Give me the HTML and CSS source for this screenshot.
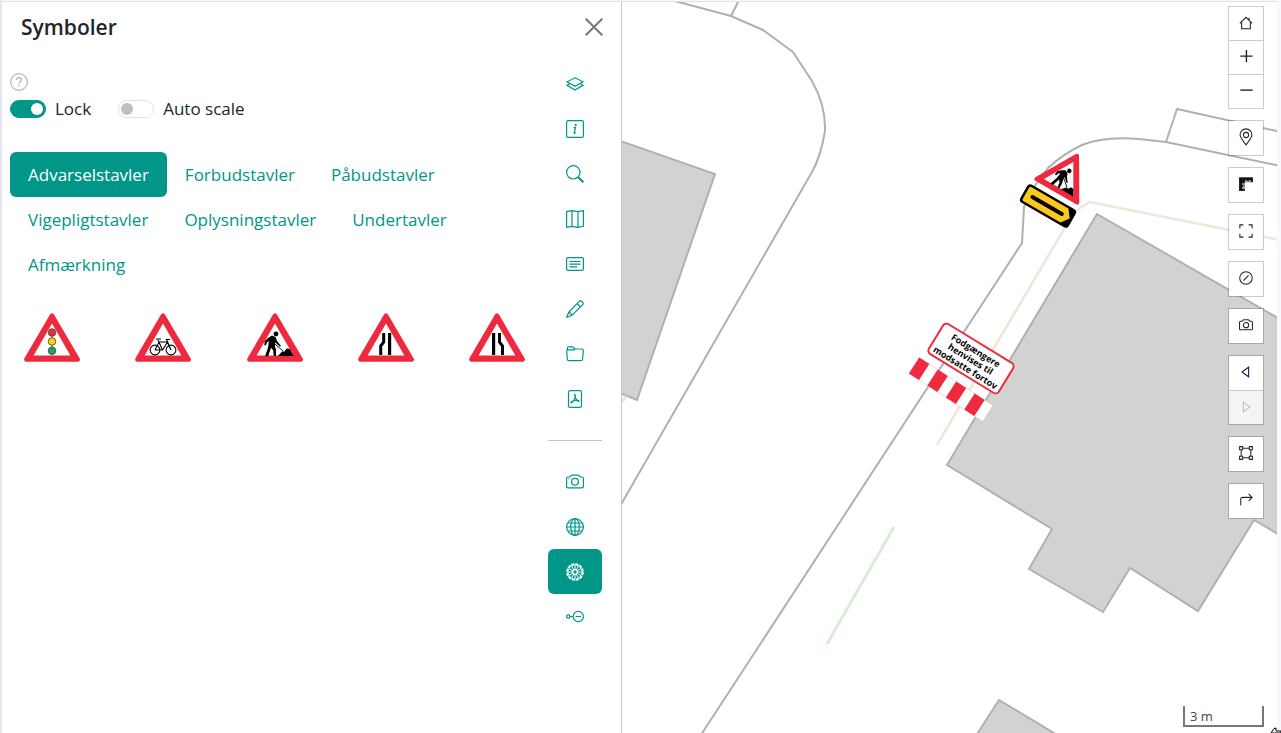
FILE: index.html
```html
<!DOCTYPE html>
<html lang="da">
<head>
<meta charset="utf-8">
<title>Symboler</title>
<link rel="stylesheet" href="styles.css">
</head>
<body>
<svg class="defs" aria-hidden="true">
  <symbol id="triangle" viewBox="0 0 56 50">
    <path d="M28 2.7 53.6 46.5H2.4Z" fill="#ee2a3e" stroke="#ee2a3e" stroke-width="4.6" stroke-linejoin="round"/>
    <path d="M28 10.500 46.400 42.500H9.600Z" fill="#fff"/>
  </symbol>
  <symbol id="worker" viewBox="0 0 56 50">
    <circle cx="29" cy="21" r="2.4"/>
    <path d="M25 22.5 28.5 24 30 28l4 5-1 .8-5-4.6v4l1 3.500 0 6h-2.300l-.6-5.500-2-2.500-3 8.500h-3l3-9 .8-6.200-2 1.500-1 3-1.600-.5.5-4 3.500-3.300Z"/>
    <path d="m28 31 8 7" fill="none" stroke="#000" stroke-width=".9"/>
    <path d="M31 43 35 38.500 37.500 38.500 39.500 35.500 43 36 44 38.500 46.500 42.500 46.500 43Z"/>
  </symbol>
</svg>

<div class="app">
  <aside class="panel">
    <header class="panel-header">
      <h1 class="title">Symboler</h1>
      <button class="close" aria-label="Luk"><svg viewBox="0 0 18 18"><path d="m.7.7 16.600 16.600M17.300.7.7 17.300"/></svg></button>
    </header>
    <div class="panel-body">
      <section class="content">
        <button class="help" aria-label="Hjælp"><svg class="icon" viewBox="0 0 18 18"><circle cx="9" cy="9" r="8.400"/><path d="M6.500 7c0-3.200 5-3.200 5 0 0 1.600-2.500 1.800-2.500 3.700M9 12v1.500" stroke-width="1.300"/></svg></button>
        <div class="options">
          <label class="option"><input class="switch" type="checkbox" checked>Lock</label>
          <label class="option"><input class="switch" type="checkbox">Auto scale</label>
        </div>
        <nav class="tabs">
          <button class="tab active">Advarselstavler</button>
          <button class="tab">Forbudstavler</button>
          <button class="tab">Påbudstavler</button>
          <button class="tab">Vigepligtstavler</button>
          <button class="tab">Oplysningstavler</button>
          <button class="tab">Undertavler</button>
          <button class="tab">Afmærkning</button>
        </nav>
        <div class="signs">
          <button class="sign" aria-label="Lyssignal"><svg viewBox="0 0 56 50"><use href="#triangle"/><path d="M28 18v24" stroke="#555"/><g stroke="#444" stroke-width=".8"><circle cx="28" cy="19.500" r="3.800" fill="#e3303b"/><circle cx="28" cy="28.500" r="3.800" fill="#fbd00f"/><circle cx="28" cy="37.700" r="3.800" fill="#1ba561"/></g></svg></button>
          <button class="sign" aria-label="Cyklister"><svg viewBox="0 0 56 50"><use href="#triangle"/><g fill="none" stroke="#000" stroke-width="1.100"><circle cx="20" cy="37" r="4.900"/><circle cx="36" cy="37" r="4.900"/><path d="m20 37 4-8h8.500l-5 8H20m7.500 0L23 27m-2-1h5m6.500 3.500L36 37l-4.500-10.500H35"/></g></svg></button>
          <button class="sign" aria-label="Vejarbejde"><svg viewBox="0 0 56 50"><use href="#triangle"/><use href="#worker"/></svg></button>
          <button class="sign" aria-label="Indsnævret vej venstre"><svg viewBox="0 0 56 50"><use href="#triangle"/><path d="M30 20h3.200v22H30zM24.200 20h3v9.500l-3 4V42h-3v-9.500l3-4z"/></svg></button>
          <button class="sign" aria-label="Indsnævret vej højre"><svg viewBox="0 0 56 50"><use href="#triangle"/><path d="M23 20h3.200v22H23zM29 20h3v8.500l3 4V42h-3v-8.500l-3-4z"/></svg></button>
        </div>
      </section>
      <nav class="rail">
        <button class="rail-item" aria-label="Lag"><svg class="icon" viewBox="0 0 18 18"><path d="m9 2.800 8 4-8 4.500-8-4.500Z"/><path d="m3.500 8.800-2.500 1.500 8 4.700 8-4.700-2.500-1.500"/></svg></button>
        <button class="rail-item" aria-label="Info"><svg class="icon" viewBox="0 0 18 18"><rect x=".6" y=".6" width="16.800" height="16.800" rx="1.500"/><path d="M7.500 7.500h2L8.200 13h1.600" stroke-width="1.300"/><circle cx="9.700" cy="4.800" r=".5"/></svg></button>
        <button class="rail-item" aria-label="Søg"><svg class="icon" viewBox="0 0 18 18"><circle cx="7.300" cy="7.300" r="6.700"/><path d="m12 12 5.300 5.300" stroke-width="2"/></svg></button>
        <button class="rail-item" aria-label="Kort"><svg class="icon" viewBox="0 0 18 18"><path d="M.6 1.700 6 .7l6 1 5.400-1v15.600l-5.400 1-6-1-5.400 1ZM6 .7v15.600m6-14.600v15.600"/></svg></button>
        <button class="rail-item" aria-label="Signatur"><svg class="icon" viewBox="0 0 18 18"><rect x=".6" y="2.600" width="16.800" height="12.800" rx="1.500"/><path d="M3.500 6.500h11m-11 2.700h11m-11 2.700h7.500"/></svg></button>
        <button class="rail-item" aria-label="Tegn"><svg class="icon" viewBox="0 0 18 18"><path d="M13.500 1.200q1-.9 2 0l1.300 1.300q.9 1 0 2L6 15.300.8 17.200l2-5.200ZM11 3.500l3.500 3.500M2.800 12l1.200.3v1.500l1.500.2.500 1.300"/></svg></button>
        <button class="rail-item" aria-label="Mappe"><svg class="icon" viewBox="0 0 18 18"><path d="M1.400 5V3q0-1.200 1.200-1.200h4L9 4h6.500q2 0 1.800 2l-.7 8q-.2 1.700-1.700 1.700h-12q-1.400 0-1.600-1.700L.7 6q0-1 1-1.200H9"/></svg></button>
        <button class="rail-item" aria-label="PDF"><svg class="icon" viewBox="0 0 18 18"><rect x="2.500" y=".6" width="13" height="16.800" rx="1.700"/><path d="M8.800 4.500q1.500 1-.2 4.500-1.500 3.500-3.400 4c-1.200-.7 1-2 3.600-2.500 3-.7 4.500-.3 4.200.8-1.500.5-4-2-4.200-6.800Z"/></svg></button>
        <hr class="rail-rule">
        <button class="rail-item" aria-label="Kamera"><svg class="icon" viewBox="0 0 18 18"><path d="M.6 5.500q0-1.500 1.400-1.500h1.500L5.700 2.100h6.600L14.500 4H16q1.400 0 1.400 1.500v8q0 1.400-1.400 1.400H2q-1.400 0-1.400-1.400Z"/><circle cx="9" cy="8.800" r="3.400"/><path d="M2.500 6h1"/></svg></button>
        <button class="rail-item" aria-label="Globus"><svg class="icon" viewBox="0 0 18 18"><circle cx="9" cy="9" r="8.400"/><ellipse cx="9" cy="9" rx="4.300" ry="8.400"/><path d="M9 .6v16.800M.6 9h16.800M2 5h14M2 13h14"/></svg></button>
        <button class="rail-item active" aria-label="Symboler"><svg class="icon" viewBox="0 0 18 18"><circle cx="9" cy="9" r="7.700" stroke-width="2.200" stroke-dasharray="3.230 .8"/><circle cx="9" cy="9" r="2.300"/><path d="M9 2v4.500m0 5V16M2 9h4.500m5 0H16M5.500 2.900l2.300 4m2.400 4.200 2.300 4M2.900 5.500l4 2.300m4.200 2.400 4 2.300M5.500 15.100l2.300-4m2.400-4.200 2.300-4M2.900 12.500l4-2.300m4.200-2.400 4-2.300" stroke-width="1"/></svg></button>
        <button class="rail-item" aria-label="Forbindelse"><svg class="icon" viewBox="0 0 18 18"><circle cx="2.300" cy="8.500" r="1.700"/><path d="M4 8.500h3m2.500 0h5.500"/><circle cx="12.300" cy="8.500" r="5.100"/></svg></button>
      </nav>
    </div>
  </aside>

  <main class="map">
    <svg class="map-canvas" viewBox="622 2 655 731" preserveAspectRatio="xMinYMin slice" role="img" aria-label="Kort">
      <g class="buildings">
        <path d="M615 139 715 174 637 400 615 391Z"/>
        <path d="M947 465 1097 214 1290 325V541L1254 520 1198 611 1130 568 1103 612 1029 569 1052 529Z"/>
        <path d="m970 745 29-45 70 42Z"/>
      </g>
      <g class="lines">
        <path d="M671 0 731 16 763 30 793 52 812 81Q826 106 825 131 821 156 812 172L615 515"/>
        <path d="m739 0-8 16"/>
        <path d="m695 744 327-501 2-36Q1029 192 1048 168 1063 154 1082 145 1104 136 1139 139L1166 142 1290 168"/>
        <path d="m1166 142 11-33 113 25"/>
      </g>
      <path class="lane" d="m937 445 130-221q5-13 23-22l200 40"/>
      <path class="hedge" d="m827 644 67-117M622 402l4-6"/>
      <g transform="translate(1063 180) rotate(30) scale(.92)">
        <use href="#triangle" x="-28" y="-33" width="56" height="50"/>
        <use href="#worker" x="-28" y="-33" width="56" height="50"/>
      </g>
      <g transform="translate(1048 206) rotate(30)">
        <rect x="-28" y="-10.500" width="56" height="21" rx="4"/>
        <path d="M-24-8h43l6 8-6 8h-43q-1.500 0-1.500-1.500v-13q0-1.500 1.500-1.500" fill="#fbc91c"/>
        <path d="M-18 0h34" stroke="#000" stroke-width="4" stroke-linecap="round"/>
      </g>
      <g transform="translate(971 358.500) rotate(31.500)">
        <rect class="plate" x="-41" y="-17.500" width="82" height="35" rx="4"/>
        <text class="plate-text" y="-6">Fodgængere</text>
        <text class="plate-text" y="4">henvises til</text>
        <text class="plate-text" y="14">modsatte fortov</text>
      </g>
      <g transform="translate(951 389.500) rotate(33)">
        <rect x="-44" y="-9.500" width="88" height="19" fill="#fff" stroke="#f7b8bf" stroke-width=".6"/>
        <path d="M-44-9.500h12v19h-12zm22 0h12v19h-12zm22 0h12v19H0zm22 0h12v19H22z" fill="#ee2a3e"/>
      </g>
    </svg>

    <div class="toolbar">
      <div class="tool-group">
        <button class="tool home" aria-label="Hjem"><svg class="tool-icon" viewBox="0 0 16 16"><path d="m1 8.500 7-7 7 7M3 7v7.500h10V7M11.500 2v2.500"/></svg></button>
        <button class="tool" aria-label="Zoom ind"><svg class="tool-icon" viewBox="0 0 16 16"><path d="M1.500 7h14M8.500 0v14" stroke-width="1.600"/></svg></button>
        <button class="tool" aria-label="Zoom ud"><svg class="tool-icon" viewBox="0 0 16 16"><path d="M1.500 7h14" stroke-width="1.600"/></svg></button>
      </div>
      <div class="tool-group"><button class="tool" aria-label="Position"><svg class="tool-icon tall" viewBox="0 0 16 20"><path d="M8 19C4 14 1.200 10.500 1.200 7.500a6.800 6.800 0 0 1 13.600 0C14.800 10.500 12 14 8 19Z"/><circle cx="8" cy="7.700" r="3"/></svg></button></div>
      <div class="tool-group"><button class="tool" aria-label="Mål"><svg class="tool-icon" viewBox="0 0 16 16"><path d="M.5 1h15v4.500H6V15.500H.5Z" fill="#111"/><path d="M8 6V3.500M10.200 6V4.500M12.400 6V3.500M6.500 8H3.500M6.500 10.200H4.500M6.500 12.400H3.500" stroke="#fff"/></svg></button></div>
      <div class="tool-group"><button class="tool" aria-label="Fuld skærm"><svg class="tool-icon" viewBox="0 0 16 16"><path d="M1 5V1h4m6 0h4v4m0 6v4h-4m-6 0H1v-4"/></svg></button></div>
      <div class="tool-group"><button class="tool" aria-label="Nulstil"><svg class="tool-icon" viewBox="0 0 16 16"><circle cx="8" cy="8" r="7.200"/><path d="m5 11 6-6"/></svg></button></div>
      <div class="tool-group"><button class="tool" aria-label="Gadefoto"><svg class="tool-icon" viewBox="0 0 16 16"><path d="M.6 5q0-1.200 1.200-1.200h1.500l2-1.700h5.400l2 1.700h1.500q1.200 0 1.200 1.200v7.300q0 1.200-1.200 1.200H1.800Q.6 13.500.6 12.300Z"/><circle cx="8" cy="8.200" r="3"/></svg></button></div>
      <div class="tool-group">
        <button class="tool" aria-label="Forrige"><svg class="tool-icon" viewBox="0 0 16 16"><path d="M11 2.500v11L3.500 8Z" stroke="#0b2a5c" stroke-width="1.300"/></svg></button>
        <button class="tool" aria-label="Næste" disabled><svg class="tool-icon" viewBox="0 0 16 16"><path d="M5 2.500v11L12.500 8Z"/></svg></button>
      </div>
      <div class="tool-group"><button class="tool" aria-label="Markér område"><svg class="tool-icon" viewBox="0 0 16 16"><path d="M.7.700h3.500v3.500H.7zM11.800.7h3.500v3.500h-3.500zM.7 11.800h3.500v3.500H.7zM11.800 11.800h3.500v3.500h-3.500zM4.200 2.500h7.600M4.200 13.500h7.600M2.500 4.200v7.600M13.500 4.200v7.600"/></svg></button></div>
      <div class="tool-group"><button class="tool" aria-label="Vis vej"><svg class="tool-icon" viewBox="0 0 16 16"><path d="M2 14V7q0-2 2-2h11M11 1l4 4-4 4"/></svg></button></div>
    </div>
    <div class="scale">3 m</div>
  </main>
</div>
<svg class="cursor" viewBox="0 0 11 6" aria-hidden="true"><path d="M1 6 4 1.500 6 1v3h5v2Z" fill="#fff" stroke="#000"/></svg>
</body>
</html>
```

FILE: styles.css
```css
* { box-sizing: border-box; }

body {
  margin: 0;
  min-height: 100vh;
  display: flex;
  padding: 1px 4px 0 2px;
  background: linear-gradient(to right, #e4e6f2 2px, #f8f8fe 2px);
  color: #212529;
  font: 17px/27px "Open Sans", "Noto Sans", sans-serif;
  overflow: hidden;
}

button {
  margin: 0;
  padding: 0;
  border: 0;
  background: none;
  color: inherit;
  font: inherit;
  cursor: pointer;
}

svg { display: block; }

.defs { position: absolute; width: 0; height: 0; }

.app {
  flex: 1;
  min-width: 0;
  display: flex;
  border-top: 1px solid #e2e2e4;
  background: #fff;
}

.panel {
  flex: 0 0 620px;
  border-right: 1px solid #c8c8c8;
}

.panel-header {
  display: flex;
  align-items: center;
  justify-content: space-between;
  padding: 10px 18px 0 19px;
}

.title {
  margin: 0;
  font-size: 21px;
  line-height: 30px;
  font-weight: 600;
}

.close svg {
  width: 18px;
  height: 18px;
  stroke: #777;
  stroke-width: 2;
}

.panel-body {
  display: flex;
  gap: 7px;
  padding: 19px 19px 0 8px;
}

.content {
  flex: 1;
  min-width: 0;
  padding-top: 12px;
}

.icon {
  width: 18px;
  height: 18px;
  fill: none;
  stroke: currentColor;
  stroke-width: 1.2;
}

.help { display: block; color: #b5b5b5; }

.options {
  display: flex;
  gap: 27px;
  padding-top: 4px;
}

.option {
  display: flex;
  align-items: center;
  gap: 9px;
}

.switch {
  appearance: none;
  width: 36px;
  height: 18px;
  margin: 0;
  padding: 2px;
  display: flex;
  align-items: center;
  border: 1px solid #dee2e6;
  border-radius: 9px;
  background: #fff;
}

.switch::before {
  content: "";
  width: 12px;
  height: 12px;
  border-radius: 50%;
  background: #bfbfbf;
}

.switch:checked {
  justify-content: flex-end;
  border-color: #009688;
  background: #009688;
}

.switch:checked::before { background: #fff; }

.tabs {
  display: flex;
  flex-wrap: wrap;
  padding-top: 30px;
}

.tab {
  padding: 9px 18px;
  border-radius: 6px;
  color: #009688;
}

.tab.active { background: #009688; color: #fff; }

.signs {
  display: flex;
  justify-content: space-between;
  padding: 26px 16px 0 14px;
}

.sign svg { width: 56px; height: 50px; }

.rail {
  flex: 0 0 54px;
  display: flex;
  flex-direction: column;
}

.rail-item {
  display: flex;
  align-items: center;
  justify-content: center;
  height: 45px;
  border-radius: 6px;
  color: #009688;
}

.rail-item.active { background: #009688; color: #fff; }

.rail-rule {
  width: 100%;
  margin: 19px 0 18px;
  border: 0;
  border-top: 1px solid #c4c4c4;
}

.map {
  flex: 1;
  min-width: 0;
  position: relative;
  overflow: hidden;
}

.map-canvas {
  position: absolute;
  inset: 0;
  width: 100%;
  height: 100%;
}

.buildings { fill: #d2d2d2; stroke: #b0b0b0; stroke-width: 2; }
.lines { fill: none; stroke: #b0b0b0; stroke-width: 2; stroke-linejoin: round; }
.lane { fill: none; stroke: #f1e4d8; stroke-width: 2.5; }
.hedge { fill: none; stroke: #d9ecd6; stroke-width: 3; }

.plate { fill: #fff; stroke: #ee2a3e; stroke-width: 2; }

.plate-text {
  font: 700 9px "Open Sans", "Noto Sans", sans-serif;
  text-anchor: middle;
}

.toolbar {
  position: absolute;
  top: 4px;
  right: 13px;
  display: flex;
  flex-direction: column;
  gap: 11px;
}

.tool-group {
  width: 36px;
  border: 1px solid rgba(0, 0, 0, .2);
  background: #fff;
  background-clip: padding-box;
}

.tool {
  display: flex;
  align-items: center;
  justify-content: center;
  width: 100%;
  height: 34px;
  padding-bottom: 2px;
}

.tool.home { height: 33px; }
.tool + .tool { border-top: 1px solid #ccc; }
.tool:disabled { background: #f4f4f4; color: #bbb; }

.tool-icon {
  width: 14px;
  height: 14px;
  fill: none;
  stroke: currentColor;
  stroke-width: 1.2;
}

.tool-icon.tall { height: 18px; }

.scale {
  position: absolute;
  right: 13px;
  bottom: 6px;
  width: 81px;
  padding: 2px 0 0 5px;
  border: 2px solid #777;
  border-top: 0;
  color: #444;
  font-size: 13px;
  line-height: 17px;
}

.cursor {
  position: fixed;
  right: 0;
  bottom: 0;
  width: 11px;
  height: 6px;
}
```
